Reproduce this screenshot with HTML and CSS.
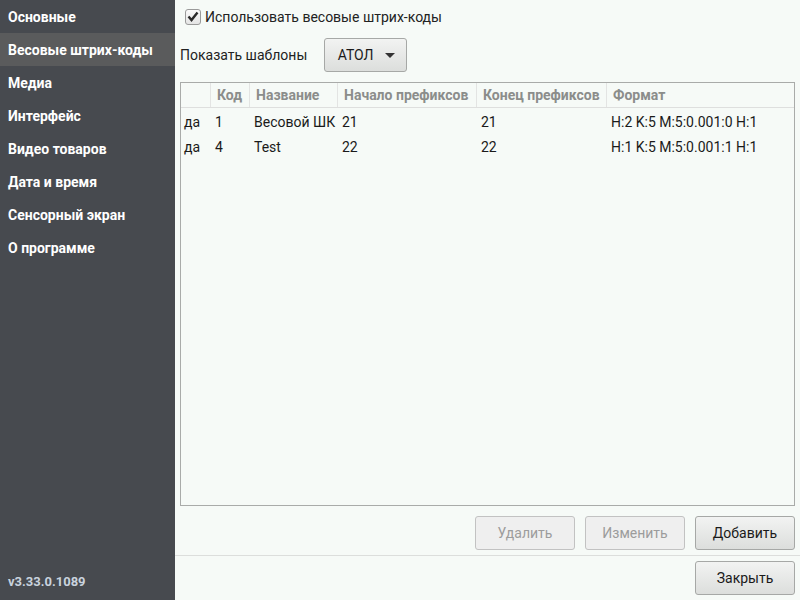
FILE: index.html
```html
<!DOCTYPE html>
<html lang="ru">
<head>
<meta charset="utf-8">
<link rel="stylesheet" href="styles.css">
</head>
<body>
<div class="app">
  <nav class="sidebar">
    <div class="nav-item">Основные</div>
    <div class="nav-item active">Весовые штрих-коды</div>
    <div class="nav-item">Медиа</div>
    <div class="nav-item">Интерфейс</div>
    <div class="nav-item">Видео товаров</div>
    <div class="nav-item">Дата и время</div>
    <div class="nav-item">Сенсорный экран</div>
    <div class="nav-item">О программе</div>
    <div class="version">v3.33.0.1089</div>
  </nav>
  <main class="main">
    <div class="content">
      <label class="check-row">
        <span class="checkbox">
          <svg width="12" height="11" viewBox="0 0 12 11"><path d="M1.5 5.5 L4.5 9 L10.5 1.5" fill="none" stroke="#2b2b2b" stroke-width="2.4" stroke-linejoin="miter"/></svg>
        </span>
        <span>Использовать весовые штрих-коды</span>
      </label>
      <div class="template-row">
        <span class="template-label">Показать шаблоны</span>
        <button class="btn combo">АТОЛ <span class="caret"></span></button>
      </div>
      <div class="table">
        <div class="row head">
          <div class="c c0"></div>
          <div class="c c1">Код</div>
          <div class="c c2">Название</div>
          <div class="c c3">Начало префиксов</div>
          <div class="c c4">Конец префиксов</div>
          <div class="c c5">Формат</div>
        </div>
        <div class="row">
          <div class="c c0">да</div>
          <div class="c c1">1</div>
          <div class="c c2">Весовой ШК</div>
          <div class="c c3">21</div>
          <div class="c c4">21</div>
          <div class="c c5">H:2 K:5 M:5:0.001:0 H:1</div>
        </div>
        <div class="row">
          <div class="c c0">да</div>
          <div class="c c1">4</div>
          <div class="c c2">Test</div>
          <div class="c c3">22</div>
          <div class="c c4">22</div>
          <div class="c c5">H:1 K:5 M:5:0.001:1 H:1</div>
        </div>
      </div>
      <div class="actions">
        <button class="btn disabled">Удалить</button>
        <button class="btn disabled">Изменить</button>
        <button class="btn">Добавить</button>
      </div>
    </div>
    <div class="footer">
      <button class="btn">Закрыть</button>
    </div>
  </main>
</div>
</body>
</html>
```

FILE: styles.css
```css
* { box-sizing: border-box; }
html, body { margin: 0; padding: 0; }
body {
  width: 800px;
  height: 600px;
  overflow: hidden;
  font-family: Roboto, "Liberation Sans", sans-serif;
  font-size: 14px;
  color: #1a1a1a;
  background: #f6faf7;
}
.app {
  display: flex;
  width: 800px;
  height: 600px;
}
.sidebar {
  width: 175px;
  flex: none;
  background: #474a4f;
  display: flex;
  flex-direction: column;
  color: #ffffff;
  font-weight: bold;
  font-size: 14px;
}
.nav-item {
  height: 33px;
  line-height: 31px;
  padding-top: 2px;
  padding-left: 8px;
  white-space: nowrap;
}
.nav-item.active { background: #5a5b5c; }
.version {
  margin-top: auto;
  height: 33px;
  line-height: 30px;
  padding-left: 8px;
  color: #c9d3de;
  font-size: 13px;
}
.main {
  flex: 1;
  display: flex;
  flex-direction: column;
  min-width: 0;
}
.content {
  flex: 1;
  display: flex;
  flex-direction: column;
  padding: 0 5px 0 5px;
}
.check-row {
  display: flex;
  align-items: center;
  height: 34px;
  padding-left: 5px;
  padding-bottom: 1px;
  gap: 4px;
  color: #222;
}
.checkbox {
  width: 16px;
  height: 16px;
  border: 1px solid #9a9a9a;
  border-radius: 3px;
  background: linear-gradient(#fbfbfb, #e4e4e4);
  display: flex;
  align-items: center;
  justify-content: center;
}
.template-row {
  display: flex;
  align-items: center;
  height: 34px;
  margin-top: 4px;
}
.template-label { width: 144px; color: #222; }
.btn {
  font-family: Roboto, "Liberation Sans", sans-serif;
  font-size: 14px;
  color: #1a1a1a;
  height: 34px;
  width: 100px;
  border: 1px solid #a6a8a6;
  border-radius: 3px;
  background: linear-gradient(#f2f3f2, #dcdedc);
  padding: 0;
  display: flex;
  align-items: center;
  justify-content: center;
}
.btn.disabled {
  color: #9c9c9c;
  border-color: #c2c2c2;
  background: #efefef;
}
.combo {
  width: 83px;
  gap: 12px;
  padding-left: 2px;
}
.caret {
  width: 0;
  height: 0;
  border-left: 5px solid transparent;
  border-right: 5px solid transparent;
  border-top: 5px solid #333;
}
.table {
  margin-top: 10px;
  height: 424px;
  border: 1px solid #a9aba9;
  background: #f6faf7;
  display: flex;
  flex-direction: column;
}
.row {
  display: flex;
  height: 25px;
  align-items: center;
}
.row.head {
  border-bottom: 1px solid #dedfde;
  color: #8b8d8b;
  font-weight: bold;
  height: 25px;
  margin-bottom: 1px;
}
.c {
  height: 100%;
  display: flex;
  align-items: center;
  padding-left: 3px;
  white-space: nowrap;
  overflow: hidden;
}
.row.head .c { border-right: 1px solid #e3e4e3; }
.row.head .c5 { border-right: none; }
.c0 { width: 30px; }
.c1 { width: 39px; }
.c2 { width: 88px; }
.c3 { width: 139px; }
.c4 { width: 130px; }
.c5 { flex: 1; }
.row .c1, .row .c2, .row .c3, .row .c4, .row .c5 { padding-left: 4px; }
.row.head .c1, .row.head .c2, .row.head .c3, .row.head .c4, .row.head .c5 { padding-left: 6px; }
.actions {
  display: flex;
  justify-content: flex-end;
  gap: 10px;
  margin-top: 10px;
  padding-bottom: 5px;
}
.footer {
  border-top: 1px solid #dcdedc;
  display: flex;
  justify-content: flex-end;
  padding: 5px 5px 5px 0;
}
```
